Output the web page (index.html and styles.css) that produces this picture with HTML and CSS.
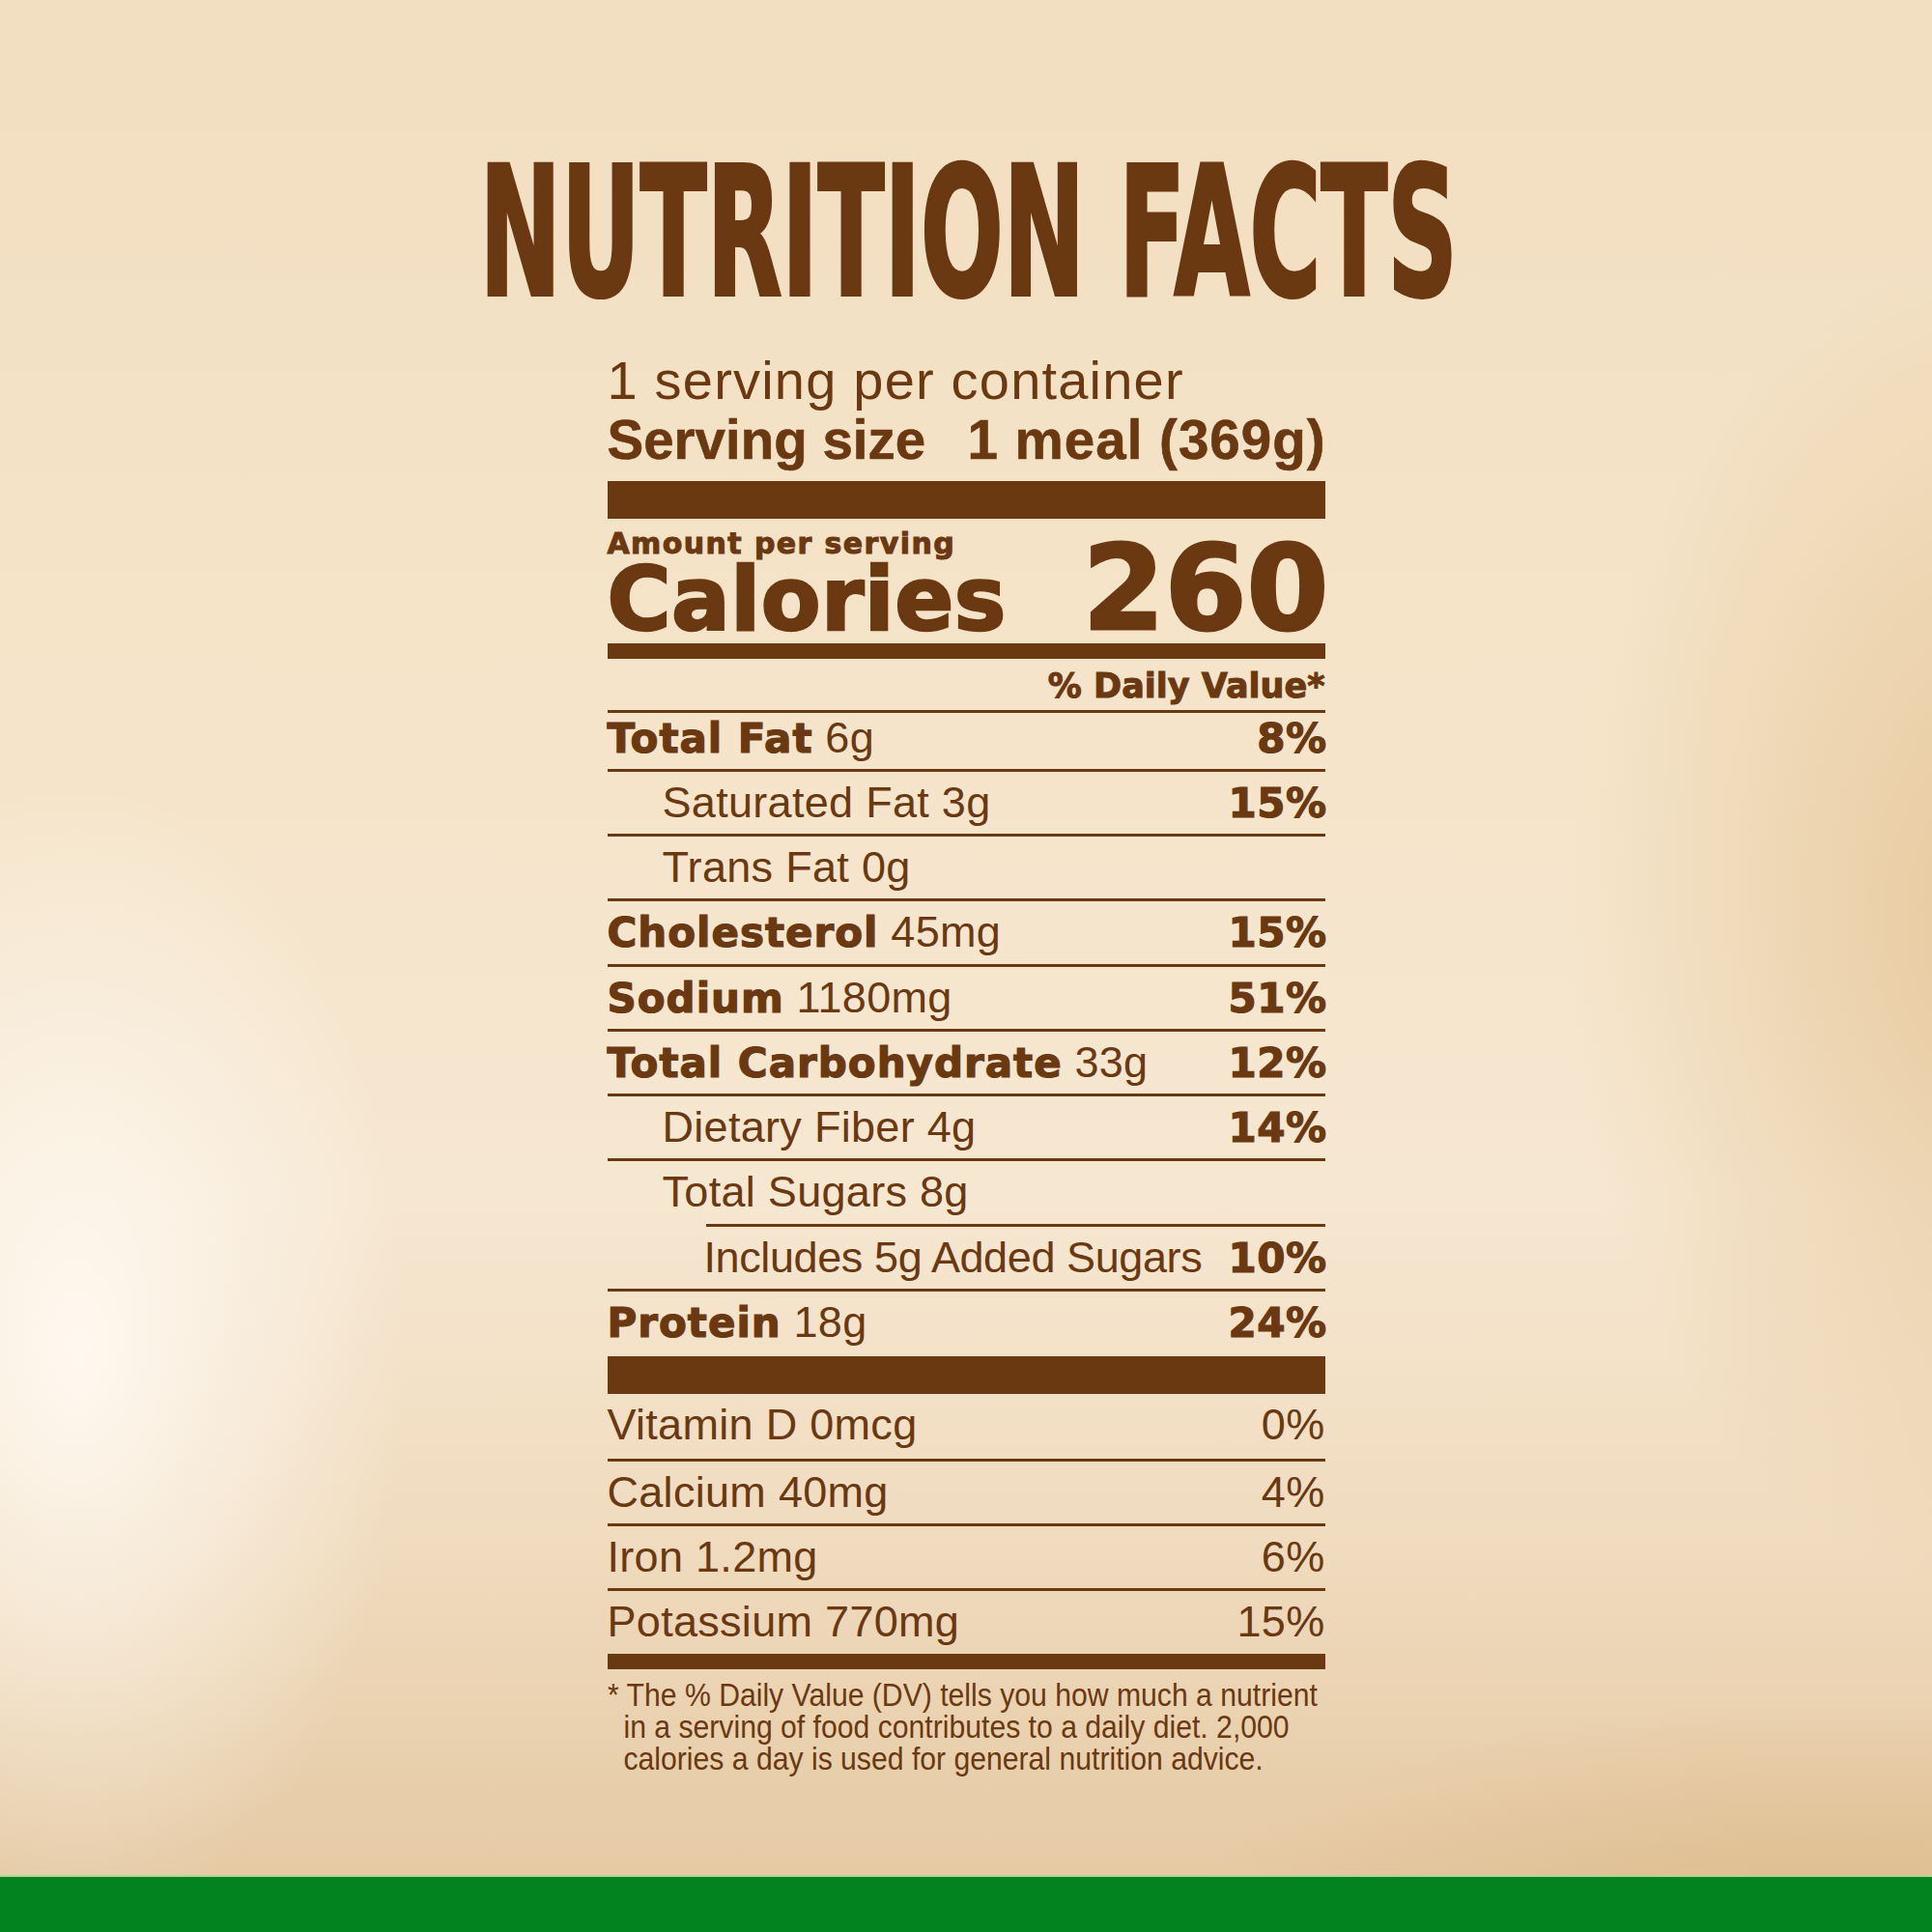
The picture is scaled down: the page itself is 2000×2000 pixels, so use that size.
FILE: index.html
```html
<!DOCTYPE html>
<html lang="en">
<head>
<meta charset="utf-8">
<title>Nutrition Facts</title>
<link rel="stylesheet" href="styles.css">
</head>
<body>
<div class="page">
  <main class="content">
    <h1 class="title"><span class="title-text">NUTRITION FACTS</span></h1>
    <section class="label">
      <div class="servings">1 serving per container</div>
      <div class="serving-size"><span>Serving size</span><span class="size-value">1 meal (369g)</span></div>
      <div class="bar bar-thick"></div>
      <div class="cal-block">
        <div class="cal-left">
          <div class="amount">Amount per serving</div>
          <div class="cal-word">Calories</div>
        </div>
        <div class="cal-num">260</div>
      </div>
      <div class="bar bar-mid"></div>
      <div class="dv-head">% Daily Value*</div>

      <div class="row first"><span class="name"><b>Total Fat</b> 6g</span><b class="pct">8%</b></div>
      <div class="row ind1"><span class="name">Saturated Fat 3g</span><b class="pct">15%</b></div>
      <div class="row ind1"><span class="name">Trans Fat 0g</span></div>
      <div class="row"><span class="name"><b>Cholesterol</b> 45mg</span><b class="pct">15%</b></div>
      <div class="row"><span class="name"><b>Sodium</b> 1180mg</span><b class="pct">51%</b></div>
      <div class="row"><span class="name"><b>Total Carbohydrate</b> 33g</span><b class="pct">12%</b></div>
      <div class="row ind1"><span class="name">Dietary Fiber 4g</span><b class="pct">14%</b></div>
      <div class="row ind1"><span class="name">Total Sugars 8g</span></div>
      <div class="row ind2"><span class="name">Includes 5g Added Sugars</span><b class="pct">10%</b></div>
      <div class="row protein"><span class="name"><b>Protein</b> 18g</span><b class="pct">24%</b></div>
      <div class="bar bar-thick2"></div>

      <div class="row vit-first"><span class="name">Vitamin D 0mcg</span><span class="pct-reg">0%</span></div>
      <div class="row"><span class="name">Calcium 40mg</span><span class="pct-reg">4%</span></div>
      <div class="row"><span class="name">Iron 1.2mg</span><span class="pct-reg">6%</span></div>
      <div class="row"><span class="name">Potassium 770mg</span><span class="pct-reg">15%</span></div>
      <div class="bar bar-mid2"></div>

      <p class="footnote">* The % Daily Value (DV) tells you how much a nutrient<br>in a serving of food contributes to a daily diet. 2,000<br>calories a day is used for general nutrition advice.</p>
    </section>
  </main>
  <footer class="green-band"></footer>
</div>
</body>
</html>
```

FILE: styles.css
```css
:root {
  --brown: #6a3811;
}

* {
  box-sizing: border-box;
}

html,
body {
  margin: 0;
  padding: 0;
}

body {
  width: 2000px;
  height: 2000px;
  overflow: hidden;
  color: var(--brown);
  font-family: "Liberation Sans", Arial, sans-serif;
}

.page {
  width: 2000px;
  height: 2000px;
  display: flex;
  flex-direction: column;
  background:
    radial-gradient(ellipse 480px 820px at 4% 70%, rgba(255, 251, 244, 0.9), rgba(255, 251, 244, 0) 72%),
    radial-gradient(ellipse 650px 1000px at 104% 48%, rgba(218, 176, 116, 0.55), rgba(218, 176, 116, 0) 70%),
    radial-gradient(ellipse 900px 320px at 95% 100%, rgba(214, 172, 116, 0.5), rgba(214, 172, 116, 0) 75%),
    linear-gradient(to bottom, #f2dec0 0%, #f5e4c9 35%, #f6e7d1 62%, #f0dbbe 80%, #e3c7a0 100%);
}

.content {
  flex: 1;
  padding-top: 146px;
}

.title {
  margin: 0;
  height: 190px;
  display: flex;
  justify-content: center;
  padding-left: 6px;
  font-family: "DejaVu Sans", sans-serif;
  font-weight: 700;
  font-size: 185px;
  line-height: 190px;
  -webkit-text-stroke: 4px var(--brown);
}

.title-text {
  display: inline-block;
  white-space: nowrap;
  transform: scaleX(0.545);
}

.label {
  width: 743px;
  margin: 0 auto;
}

.servings {
  margin-top: 30px;
  font-size: 56px;
  line-height: 56px;
  letter-spacing: 1.2px;
  white-space: nowrap;
}

.serving-size {
  margin-top: 6px;
  display: flex;
  justify-content: space-between;
  font-weight: 700;
  font-size: 56.5px;
  line-height: 56px;
  white-space: nowrap;
  -webkit-text-stroke: 0.6px var(--brown);
}

.size-value {
  letter-spacing: 1px;
  margin-right: -1px;
}

.bar {
  background: var(--brown);
}

.bar-thick {
  height: 39px;
  margin-top: 14px;
}

.cal-block {
  margin-top: 7.6px;
  display: flex;
  justify-content: space-between;
  align-items: flex-end;
  font-family: "DejaVu Sans", sans-serif;
  font-weight: 700;
  white-space: nowrap;
}

.amount {
  font-size: 30px;
  line-height: 36px;
  letter-spacing: 1.4px;
  -webkit-text-stroke: 1px var(--brown);
}

.cal-word {
  font-size: 90px;
  line-height: 80px;
  letter-spacing: 0.5px;
  -webkit-text-stroke: 2.5px var(--brown);
}

.cal-num {
  font-size: 122px;
  line-height: 102.2px;
  margin-right: -4px;
  -webkit-text-stroke: 3px var(--brown);
}

.bar-mid {
  height: 16px;
  margin-top: 5.4px;
}

.dv-head {
  text-align: right;
  padding-top: 3px;
  font-family: "DejaVu Sans", sans-serif;
  font-weight: 700;
  font-size: 35px;
  line-height: 50px;
  white-space: nowrap;
  -webkit-text-stroke: 1px var(--brown);
}

.row {
  display: flex;
  justify-content: space-between;
  align-items: baseline;
  height: 67.25px;
  border-top: 3px solid var(--brown);
  font-size: 45px;
  line-height: 64.25px;
  letter-spacing: 0.3px;
  white-space: nowrap;
}

.row b {
  font-family: "DejaVu Sans", sans-serif;
  font-weight: 700;
  font-size: 42px;
  letter-spacing: 1px;
  -webkit-text-stroke: 1.2px var(--brown);
}

.row b.pct {
  letter-spacing: 0.5px;
  margin-right: -2px;
}

.row.first {
  height: 61px;
  line-height: 52px;
}

.row.ind1 {
  padding-left: 57px;
}

.row.ind2 {
  padding-left: 100px;
  padding-top: 3px;
  border-top: none;
  letter-spacing: -0.4px;
  background: linear-gradient(var(--brown), var(--brown)) 102px 0 / calc(100% - 102px) 3px no-repeat;
}

.row.protein {
  height: 70px;
}

.bar-thick2 {
  height: 39px;
}

.row.vit-first {
  border-top: none;
  height: 67px;
}

.bar-mid2 {
  height: 16px;
}

.footnote {
  margin: 10px 0 0;
  display: inline-block;
  padding-left: 18px;
  text-indent: -18px;
  font-size: 33px;
  line-height: 33px;
  white-space: nowrap;
  transform: scaleX(0.914);
  transform-origin: left top;
}

.green-band {
  height: 59px;
  flex: none;
  background: #03831f;
  border-top: 2px solid #b5d597;
}
```
